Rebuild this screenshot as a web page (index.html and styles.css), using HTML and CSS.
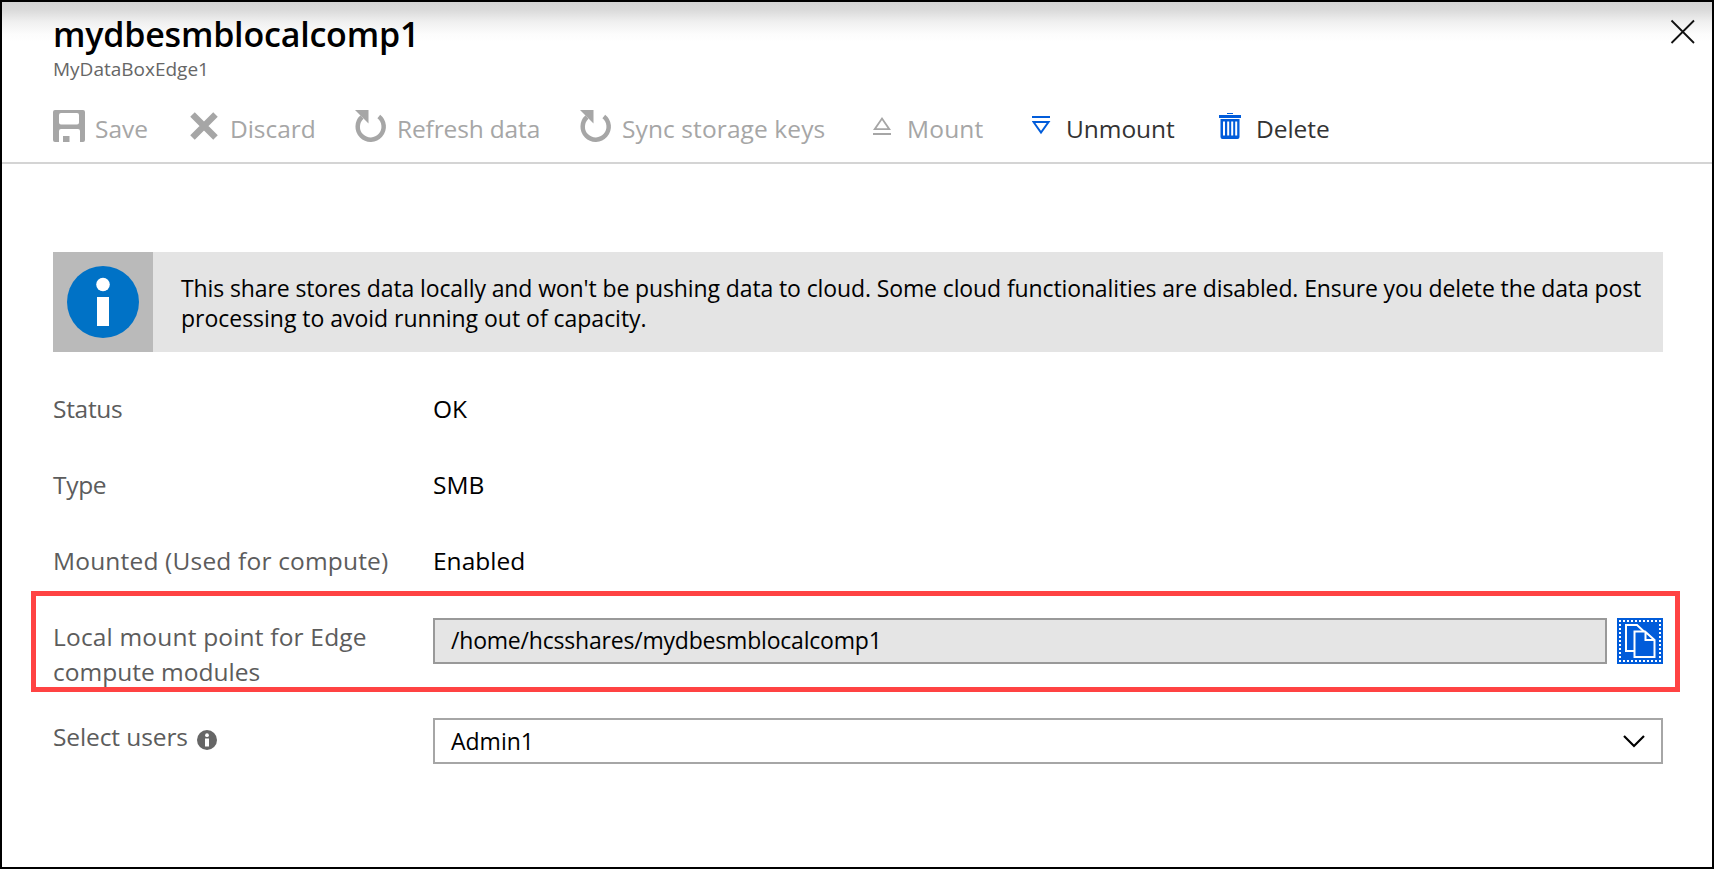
FILE: index.html
```
<!DOCTYPE html>
<html lang="en">
<head>
<meta charset="utf-8">
<title>mydbesmblocalcomp1</title>
<link rel="stylesheet" href="styles.css">
</head>
<body>
<main class="blade">
  <header class="header">
    <div class="heading">
      <h1 class="title">mydbesmblocalcomp1</h1>
      <p class="subtitle">MyDataBoxEdge1</p>
    </div>
    <svg class="close" width="26" height="26" viewBox="0 0 26 26"><path d="M1.500 1.500L24 24M24 1.500L1.500 24" fill="none" stroke="#111" stroke-width="1.800"/></svg>
  </header>
  <nav class="toolbar">
    <div class="command disabled">
      <svg class="icon" width="42" height="34" viewBox="0 0 42 34"><path fill="currentColor" fill-rule="evenodd" d="M2 1H30Q32 1 32 3V31Q32 33 30 33H27V22Q27 20 25 20H8Q6 20 6 22V33H2Q0 33 0 31V3Q0 1 2 1ZM8 4Q6 4 6 6V13.500Q6 15.500 8 15.500H24Q26 15.500 26 13.500V6Q26 4 24 4ZM10 27H16.500V33H10Z"/></svg>
      <span class="label save">Save</span>
    </div>
    <div class="command disabled">
      <svg class="icon" width="39" height="34" viewBox="0 0 39 34"><path stroke="currentColor" stroke-width="6.400" d="M2.500 5.500L25.500 28.500M25.500 5.500L2.500 28.500"/></svg>
      <span class="label">Discard</span>
    </div>
    <div class="command disabled">
      <svg class="icon" width="41" height="34" viewBox="0 0 41 34"><path fill="none" stroke="currentColor" stroke-width="4.500" d="M7 8A13 13 0 1 0 23.800 7.500"/><path fill="currentColor" d="M0 1H13.500V14.500Z"/></svg>
      <span class="label wide-down">Refresh data</span>
    </div>
    <div class="command disabled">
      <svg class="icon" width="41" height="34" viewBox="0 0 41 34"><path fill="none" stroke="currentColor" stroke-width="4.500" d="M7 8A13 13 0 1 0 23.800 7.500"/><path fill="currentColor" d="M0 1H13.500V14.500Z"/></svg>
      <span class="label sync">Sync storage keys</span>
    </div>
    <div class="command disabled">
      <svg class="icon" width="33" height="34" viewBox="0 0 33 34"><path fill="none" stroke="currentColor" stroke-width="1.800" d="M1.700 20.200H16.300L9 9.500ZM0 25H18"/></svg>
      <span class="label wide-up">Mount</span>
    </div>
    <div class="command">
      <svg class="icon accent" width="33" height="34" viewBox="0 0 33 34"><path fill="none" stroke="currentColor" stroke-width="2" d="M1.500 13H16.500L9 23.500ZM0 8H18"/></svg>
      <span class="label">Unmount</span>
    </div>
    <div class="command">
      <svg class="icon accent" width="36" height="34" viewBox="0 0 36 34"><path fill="currentColor" fill-rule="evenodd" d="M8 4H14V5H8ZM0 6H22V9H0ZM1.500 10H20.500V28Q20.500 30 18.500 30H3.500Q1.500 30 1.500 28ZM4 12.500V26.500H6V12.500ZM8.200 12.500V26.500H10.200V12.500ZM12.200 12.500V26.500H14.200V12.500ZM16.200 12.500V26.500H18.200V12.500Z"/></svg>
      <span class="label">Delete</span>
    </div>
  </nav>
  <section class="content">
    <div class="banner">
      <div class="banner-icon">
        <svg width="72" height="72" viewBox="0 0 72 72"><circle cx="36" cy="36" r="36" fill="#0072c6"/><circle cx="36" cy="18.500" r="6.800" fill="#fff"/><path fill="#fff" d="M30 31H42V60H30Z"/></svg>
      </div>
      <p class="banner-text">This share stores data locally and won't be pushing data to cloud. Some cloud functionalities are disabled. Ensure you delete the data post<br><span class="second-line">processing to avoid running out of capacity.</span></p>
    </div>
    <dl class="facts">
      <dt class="tight">Status</dt><dd>OK</dd>
      <dt class="tight">Type</dt><dd>SMB</dd>
      <dt class="wide-up">Mounted (Used for compute)</dt><dd>Enabled</dd>
    </dl>
    <div class="highlight">
      <div class="mount-label"><span class="wide-up">Local mount point for Edge</span><br>compute modules</div>
      <div class="field readonly">/home/hcsshares/mydbesmblocalcomp1</div>
      <div class="copy">
        <svg width="46" height="46" viewBox="0 0 46 46"><path fill="none" stroke="#fff" stroke-width="2" stroke-dasharray="2 2" d="M2 3H44M3 6V44M43 6V44M6 43H42"/><g fill="none" stroke="#fff" stroke-width="2"><path d="M17 33H9V7H20L27 13.500"/><path d="M17.500 13.500H28L37.500 22V39H17.500ZM28.500 13.500V22H37.500"/></g></svg>
      </div>
    </div>
    <div class="users">
      <div class="users-label"><span class="tight-users">Select users</span>
        <svg width="20" height="20" viewBox="0 0 20 20"><circle cx="10" cy="10" r="10" fill="#666"/><circle cx="10" cy="5.200" r="1.900" fill="#fff"/><path fill="#fff" d="M8 8.500H12V16.500H8Z"/></svg>
      </div>
      <div class="field select"><span>Admin1</span>
        <svg width="22" height="13" viewBox="0 0 22 13"><path d="M1 1L11 11L21 1" fill="none" stroke="#000" stroke-width="2.200"/></svg>
      </div>
    </div>
  </section>
</main>
</body>
</html>
```
FILE: styles.css
```
* { box-sizing: border-box; }
body {
  margin: 0;
  font-family: "Open Sans", "Noto Sans", sans-serif;
  font-size: 24.5px;
  color: #000;
}
h1, p, dl, dd { margin: 0; }
svg { display: block; flex: none; }
.blade {
  width: 1714px;
  height: 869px;
  border: 2px solid #000;
  overflow: hidden;
  background: linear-gradient(#d4d4d4 0, #dadada 8px, #f0f0f0 20px, #fcfcfc 32px, #fff 40px);
}
.header {
  display: flex;
  justify-content: space-between;
  height: 79px;
  padding: 12px 16px 0 51px;
}
.title {
  font-size: 34px;
  font-weight: 600;
  line-height: 40px;
  letter-spacing: -0.2px;
}
.subtitle {
  margin-top: 3px;
  font-size: 19px;
  line-height: 24px;
  letter-spacing: 0;
  color: #666;
}
.close { margin-top: 5px; }
.toolbar {
  display: grid;
  grid-template-columns: 137px 165px 225px 293px 159px 187px auto;
  height: 83px;
  padding: 28px 0 0 51px;
  border-bottom: 2px solid #d4d4d4;
}
.command { display: flex; height: 34px; color: #333; }
.disabled { color: #a6a6a6; }
.accent { color: #015cda; }
.label {
  margin: 3px 0 0 1px;
  line-height: 34px;
  letter-spacing: -0.05px;
  white-space: nowrap;
}
.save { margin-left: 0; }
.wide-down { letter-spacing: -0.15px; }
.sync { letter-spacing: 0.1px; }
.content { padding: 88px 0 0 29px; }
.banner {
  display: flex;
  width: 1610px;
  height: 100px;
  margin-left: 22px;
  background: #e4e4e4;
}
.banner-icon {
  display: grid;
  place-items: center;
  width: 100px;
  background: #bababa;
}
.banner-text {
  padding: 21px 0 0 28px;
  font-size: 23px;
  line-height: 30px;
  letter-spacing: -0.115px;
  white-space: nowrap;
}
.second-line { letter-spacing: -0.02px; }
.facts {
  display: grid;
  grid-template-columns: 380px auto;
  grid-auto-rows: 76px;
  margin-left: 22px;
  height: 239px;
  padding-top: 40px;
  line-height: 34px;
}
.facts dt, .mount-label, .users-label { color: #5c5c5c; }
.wide-up { letter-spacing: 0.18px; }
.facts .tight { letter-spacing: -0.3px; }
.tight-users { letter-spacing: -0.1px; }
.highlight {
  display: flex;
  width: 1649px;
  height: 101px;
  padding: 22px 12px 0 17px;
  border: 5px solid #ff4343;
}
.mount-label { width: 380px; padding-top: 1px; line-height: 35px; }
.field {
  width: 1174px;
  height: 46px;
  padding-left: 16px;
  border: 2px solid #999;
  font-size: 23px;
  line-height: 41px;
}
.readonly { background: #e5e5e5; letter-spacing: -0.2px; }
.copy { width: 46px; height: 46px; margin-left: 10px; background: #015cda; }
.users { display: flex; margin: 26px 0 0 22px; }
.users-label {
  display: flex;
  gap: 9px;
  width: 380px;
  line-height: 37px;
}
.users-label svg { margin-top: 12px; }
.select {
  display: flex;
  justify-content: space-between;
  width: 1230px;
  padding-right: 16px;
  border-color: #a6a6a6;
  background: #fff;
  line-height: 42px;
}
.select svg { margin-top: 15px; }
```
